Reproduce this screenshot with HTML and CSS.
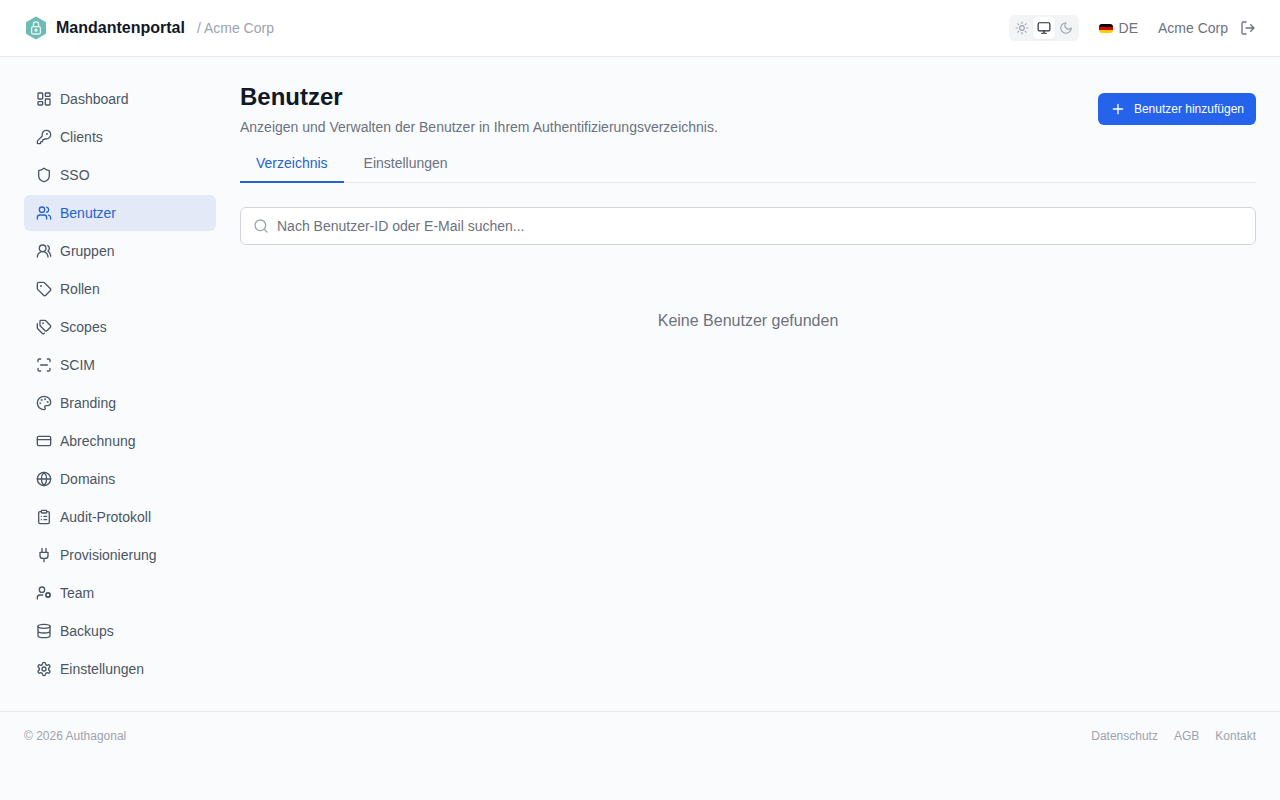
FILE: index.html
```html
<!DOCTYPE html>
<html lang="de">
<head>
<meta charset="utf-8">
<title>Mandantenportal</title>
<link rel="stylesheet" href="styles.css">
</head>
<body>
<header class="topbar">
  <div class="brand">
    <svg class="logo" viewBox="0 0 24 24"><path class="logo-hex" d="M12 0.5 22 6.2V17.8L12 23.5 2 17.8V6.2Z"/><g class="logo-lock"><rect x="7.6" y="10.6" width="8.8" height="7.4" rx="1.6"/><path d="M9.4 10.6V8.4a2.6 2.6 0 0 1 5.2 0v2.2"/><circle cx="12" cy="14.2" r="1"/></g></svg>
    <span class="brand-name">Mandantenportal</span>
    <span class="brand-tenant">/ Acme Corp</span>
  </div>
  <div class="top-actions">
    <div class="theme">
      <button class="theme-btn"><svg class="ic" viewBox="0 0 24 24"><circle cx="12" cy="12" r="4"/><path d="M12 2v2M12 20v2m-7.07-17.07 1.41 1.41m11.32 11.32 1.41 1.41M2 12h2m16 0h2M6.34 17.66l-1.41 1.41M19.07 4.93l-1.41 1.41"/></svg></button>
      <button class="theme-btn is-on"><svg class="ic" viewBox="0 0 24 24"><rect x="2" y="3" width="20" height="14" rx="2"/><path d="M8 21h8M12 17v4"/></svg></button>
      <button class="theme-btn"><svg class="ic" viewBox="0 0 24 24"><path d="M12 3a6 6 0 0 0 9 9 9 9 0 1 1-9-9Z"/></svg></button>
    </div>
    <div class="lang"><span class="flag"><i class="f1"></i><i class="f2"></i><i class="f3"></i></span>DE</div>
    <div class="user">Acme Corp</div>
    <svg class="ic logout" viewBox="0 0 24 24"><path d="m16 17 5-5-5-5M21 12H9M9 21H5a2 2 0 0 1-2-2V5a2 2 0 0 1 2-2h4"/></svg>
  </div>
</header>

<div class="shell">
  <nav class="side">
    <a class="nav"><svg class="ic" viewBox="0 0 24 24"><rect x="3" y="3" width="7" height="9" rx="1"/><rect x="14" y="3" width="7" height="5" rx="1"/><rect x="14" y="12" width="7" height="9" rx="1"/><rect x="3" y="16" width="7" height="5" rx="1"/></svg>Dashboard</a>
    <a class="nav"><svg class="ic" viewBox="0 0 24 24"><path d="M2.586 17.414A2 2 0 0 0 2 18.828V21a1 1 0 0 0 1 1h3a1 1 0 0 0 1-1v-1a1 1 0 0 1 1-1h1a1 1 0 0 0 1-1v-1a1 1 0 0 1 1-1h.172a2 2 0 0 0 1.414-.586l.814-.814a6.5 6.5 0 1 0-4-4z"/><circle cx="16.5" cy="7.5" r=".5"/></svg>Clients</a>
    <a class="nav"><svg class="ic" viewBox="0 0 24 24"><path d="M20 13c0 5-3.5 7.5-7.66 8.95a1 1 0 0 1-.67-.01C7.5 20.5 4 18 4 13V6a1 1 0 0 1 1-1c2 0 4.5-1.2 6.24-2.72a1.17 1.17 0 0 1 1.52 0C14.51 3.81 17 5 19 5a1 1 0 0 1 1 1z"/></svg>SSO</a>
    <a class="nav is-active"><svg class="ic" viewBox="0 0 24 24"><path d="M16 21v-2a4 4 0 0 0-4-4H6a4 4 0 0 0-4 4v2"/><circle cx="9" cy="7" r="4"/><path d="M22 21v-2a4 4 0 0 0-3-3.87M16 3.13a4 4 0 0 1 0 7.75"/></svg>Benutzer</a>
    <a class="nav"><svg class="ic" viewBox="0 0 24 24"><path d="M18 21a8 8 0 0 0-16 0"/><circle cx="10" cy="8" r="5"/><path d="M22 20c0-3.37-2-6.5-4-8a5 5 0 0 0-.45-8.3"/></svg>Gruppen</a>
    <a class="nav"><svg class="ic" viewBox="0 0 24 24"><path d="M12.586 2.586A2 2 0 0 0 11.172 2H4a2 2 0 0 0-2 2v7.172a2 2 0 0 0 .586 1.414l8.704 8.704a2.426 2.426 0 0 0 3.42 0l6.58-6.58a2.426 2.426 0 0 0 0-3.42z"/><circle cx="7.5" cy="7.5" r=".5"/></svg>Rollen</a>
    <a class="nav"><svg class="ic" viewBox="0 0 24 24"><path d="M13.172 2a2 2 0 0 1 1.414.586l6.71 6.71a2.4 2.4 0 0 1 0 3.408l-4.592 4.592a2.4 2.4 0 0 1-3.408 0l-6.71-6.71A2 2 0 0 1 6 9.172V3a1 1 0 0 1 1-1z"/><path d="M2 7v6.172a2 2 0 0 0 .586 1.414l6.71 6.71a2.4 2.4 0 0 0 3.31.071"/><circle cx="10.5" cy="6.5" r=".5"/></svg>Scopes</a>
    <a class="nav"><svg class="ic" viewBox="0 0 24 24"><path d="M3 7V5a2 2 0 0 1 2-2h2M17 3h2a2 2 0 0 1 2 2v2M21 17v2a2 2 0 0 1-2 2h-2M7 21H5a2 2 0 0 1-2-2v-2M7 12h10"/></svg>SCIM</a>
    <a class="nav"><svg class="ic" viewBox="0 0 24 24"><path d="M12 22a1 1 0 0 1 0-20 10 9 0 0 1 10 9 5 5 0 0 1-5 5h-2.25a1.75 1.75 0 0 0-1.4 2.8l.3.4a1.75 1.75 0 0 1-1.4 2.8z"/><circle cx="13.5" cy="6.5" r=".5"/><circle cx="17.5" cy="10.5" r=".5"/><circle cx="6.5" cy="12.5" r=".5"/><circle cx="8.5" cy="7.5" r=".5"/></svg>Branding</a>
    <a class="nav"><svg class="ic" viewBox="0 0 24 24"><rect x="2" y="5" width="20" height="14" rx="2"/><path d="M2 10h20"/></svg>Abrechnung</a>
    <a class="nav"><svg class="ic" viewBox="0 0 24 24"><circle cx="12" cy="12" r="10"/><path d="M12 2a14.5 14.5 0 0 0 0 20 14.5 14.5 0 0 0 0-20M2 12h20"/></svg>Domains</a>
    <a class="nav"><svg class="ic" viewBox="0 0 24 24"><rect x="8" y="2" width="8" height="4" rx="1"/><path d="M16 4h2a2 2 0 0 1 2 2v14a2 2 0 0 1-2 2H6a2 2 0 0 1-2-2V6a2 2 0 0 1 2-2h2M12 11h4M12 16h4M8 11h.01M8 16h.01"/></svg>Audit-Protokoll</a>
    <a class="nav"><svg class="ic" viewBox="0 0 24 24"><path d="M12 22v-5M9 8V2M15 8V2M18 8v5a4 4 0 0 1-4 4h-4a4 4 0 0 1-4-4V8Z"/></svg>Provisionierung</a>
    <a class="nav"><svg class="ic" viewBox="0 0 24 24"><path d="M10 15H6a4 4 0 0 0-4 4v2"/><circle cx="9" cy="7" r="4"/><circle cx="18" cy="15" r="3"/><path d="m14.305 16.53.923-.382m0-2.296-.923-.383m2.547-1.241-.383-.923m.383 6.467-.383.924m2.679-6.468.383-.923m.001 7.391-.382-.924m1.624-3.92.924-.383m-.924 2.679.924.383"/></svg>Team</a>
    <a class="nav"><svg class="ic" viewBox="0 0 24 24"><ellipse cx="12" cy="5" rx="9" ry="3"/><path d="M3 5V19A9 3 0 0 0 21 19V5M3 12A9 3 0 0 0 21 12"/></svg>Backups</a>
    <a class="nav"><svg class="ic" viewBox="0 0 24 24"><path d="M12.22 2h-.44a2 2 0 0 0-2 2v.18a2 2 0 0 1-1 1.73l-.43.25a2 2 0 0 1-2 0l-.15-.08a2 2 0 0 0-2.73.73l-.22.38a2 2 0 0 0 .73 2.73l.15.1a2 2 0 0 1 1 1.72v.51a2 2 0 0 1-1 1.74l-.15.09a2 2 0 0 0-.73 2.73l.22.38a2 2 0 0 0 2.73.73l.15-.08a2 2 0 0 1 2 0l.43.25a2 2 0 0 1 1 1.73V20a2 2 0 0 0 2 2h.44a2 2 0 0 0 2-2v-.18a2 2 0 0 1 1-1.73l.43-.25a2 2 0 0 1 2 0l.15.08a2 2 0 0 0 2.73-.73l.22-.39a2 2 0 0 0-.73-2.73l-.15-.08a2 2 0 0 1-1-1.74v-.5a2 2 0 0 1 1-1.74l.15-.09a2 2 0 0 0 .73-2.73l-.22-.38a2 2 0 0 0-2.73-.73l-.15.08a2 2 0 0 1-2 0l-.43-.25a2 2 0 0 1-1-1.73V4a2 2 0 0 0-2-2z"/><circle cx="12" cy="12" r="3"/></svg>Einstellungen</a>
  </nav>

  <main class="main">
    <div class="head">
      <div>
        <h1 class="title">Benutzer</h1>
        <p class="sub">Anzeigen und Verwalten der Benutzer in Ihrem Authentifizierungsverzeichnis.</p>
      </div>
      <button class="add"><svg class="ic" viewBox="0 0 24 24"><path d="M5 12h14M12 5v14"/></svg>Benutzer hinzufügen</button>
    </div>
    <div class="tabs">
      <a class="tab is-active">Verzeichnis</a>
      <a class="tab">Einstellungen</a>
    </div>
    <label class="search">
      <svg class="ic" viewBox="0 0 24 24"><path d="m21 21-4.3-4.3"/><circle cx="11" cy="11" r="8"/></svg>
      <input class="search-input" type="text" placeholder="Nach Benutzer-ID oder E-Mail suchen...">
    </label>
    <p class="empty">Keine Benutzer gefunden</p>
  </main>
</div>

<footer class="foot">
  <span>© 2026 Authagonal</span>
  <div class="foot-links"><a>Datenschutz</a><a>AGB</a><a>Kontakt</a></div>
</footer>
</body>
</html>
```
FILE: styles.css
```css
* { box-sizing: border-box; }
html, body { height: 100%; }
body {
  margin: 0;
  background: #fafbfd;
  color: #4b5563;
  font-family: "Liberation Sans", Arial, sans-serif;
  font-size: 14px;
  line-height: 20px;
}
.ic {
  width: 16px;
  height: 16px;
  flex: none;
  fill: none;
  stroke: currentColor;
  stroke-width: 2;
  stroke-linecap: round;
  stroke-linejoin: round;
}
.topbar {
  height: 57px;
  padding: 0 24px;
  background: #fff;
  border-bottom: 1px solid #e5e7eb;
  display: flex;
  align-items: center;
  justify-content: space-between;
}
.brand { display: flex; align-items: center; }
.logo { width: 24px; height: 24px; margin-right: 8px; }
.logo-hex { fill: #6cbcb4; }
.logo-lock { fill: none; stroke: #e6f5f3; stroke-width: 1.3; }
.brand-name { font-size: 16px; font-weight: 700; color: #111827; }
.brand-tenant { margin-left: 12px; color: #9ca3af; }
.top-actions { display: flex; align-items: center; }
.theme {
  display: flex;
  gap: 0;
  padding: 2px;
  background: #f3f4f6;
  border-radius: 6px;
  margin-right: 20px;
}
.theme-btn {
  width: 22px;
  height: 22px;
  padding: 0;
  border: 0;
  border-radius: 4px;
  background: transparent;
  color: #9ca3af;
  display: flex;
  align-items: center;
  justify-content: center;
}
.theme-btn .ic { width: 14px; height: 14px; }
.theme-btn.is-on { background: #fff; color: #1f2937; box-shadow: 0 1px 2px rgba(0,0,0,.05); }
.lang { display: flex; align-items: center; gap: 6px; color: #6b7280; margin-right: 20px; }
.flag { width: 14px; height: 9px; border-radius: 3px; overflow: hidden; display: flex; flex-direction: column; }
.flag i { display: block; flex: 1; }
.f1 { background: #000; }
.f2 { background: #dd0000; }
.f3 { background: #ffce00; }
.user { color: #6b7280; margin-right: 12px; }
.logout { color: #6b7280; }
.shell { display: flex; padding: 24px; gap: 24px; }
.side { width: 192px; flex: none; display: flex; flex-direction: column; gap: 2px; }
.nav {
  height: 36px;
  padding: 0 12px;
  border-radius: 6px;
  display: flex;
  align-items: center;
  gap: 8px;
  color: #4b5563;
}
.nav.is-active { background: #e3e9f7; color: #2563cf; }
.main { flex: 1; min-width: 0; }
.head { display: flex; justify-content: space-between; align-items: center; }
.title { margin: 0 0 4px; font-size: 24px; line-height: 32px; font-weight: 700; color: #111827; }
.sub { margin: 0; color: #6b7280; }
.add {
  height: 32px;
  padding: 0 12px;
  border: 0;
  border-radius: 6px;
  background: #2563eb;
  color: #fff;
  font: 12px/16px "Liberation Sans", Arial, sans-serif;
  white-space: nowrap;
  display: flex;
  align-items: center;
  gap: 8px;
}
.tabs { display: flex; gap: 4px; margin-top: 8px; border-bottom: 1px solid #e5e7eb; }
.tab { padding: 8px 16px; height: 38px; margin-bottom: -1px; color: #6b7280; border-bottom: 2px solid transparent; }
.tab.is-active { color: #2563cf; border-bottom-color: #2563cf; }
.search {
  margin-top: 24px;
  height: 38px;
  padding: 0 12px;
  background: #fff;
  border: 1px solid #d1d5db;
  border-radius: 6px;
  display: flex;
  align-items: center;
  gap: 8px;
  color: #9ca3af;
}
.search-input {
  flex: 1;
  border: 0;
  padding: 0;
  outline: 0;
  background: transparent;
  font: 14px/20px "Liberation Sans", Arial, sans-serif;
  color: #111827;
}
.search-input::placeholder { color: #6b7280; opacity: 1; }
.empty { margin: 64px 0 0; text-align: center; font-size: 16px; line-height: 24px; color: #6b7280; }
.foot {
  height: 49px;
  padding: 0 24px;
  border-top: 1px solid #e5e7eb;
  display: flex;
  align-items: center;
  justify-content: space-between;
  font-size: 12px;
  color: #9ca3af;
}
.foot-links { display: flex; gap: 16px; }
```
